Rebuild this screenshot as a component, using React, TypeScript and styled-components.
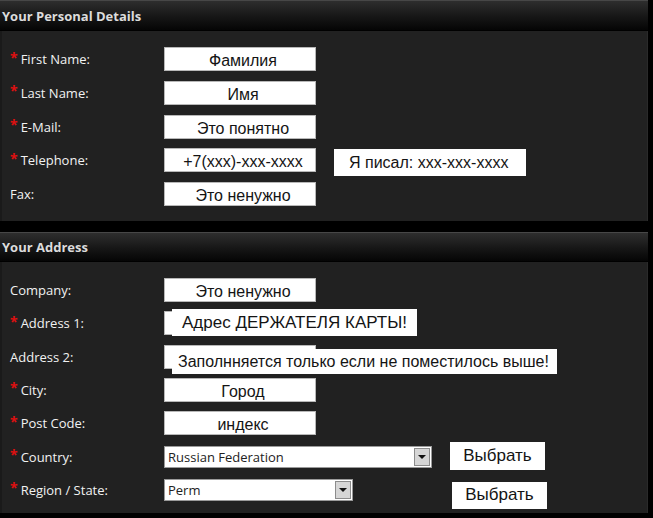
import React from 'react';
import styled, { createGlobalStyle } from 'styled-components';

const GlobalStyle = createGlobalStyle`
  html, body {
    margin: 0;
    padding: 0;
    background: #000;
  }
`;

const Page = styled.div`
  width: 653px;
  height: 518px;
  background: #000;
  overflow: hidden;
  font-family: "Open Sans", "Liberation Sans", sans-serif;
`;

const Section = styled.div<{ $gapTop?: number }>`
  width: 648px;
  margin-top: ${(p) => p.$gapTop || 0}px;
`;

const Header = styled.div<{ $h: number }>`
  height: ${(p) => p.$h}px;
  box-sizing: border-box;
  border-top: 1px solid #474747;
  background: linear-gradient(#2e2e2e, #161616 55%, #050505);
  display: flex;
  align-items: center;
  padding-left: 2px;
  font-weight: 700;
  font-size: 13px;
  color: #dcdcdc;
`;

const Body = styled.div<{ $gap: number; $pt: number; $pb: number }>`
  margin-top: 1px;
  background: #212121;
  border-left: 2px solid #1a1a1a;
  border-right: 1px solid #2a2a2a;
  display: flex;
  flex-direction: column;
  gap: ${(p) => p.$gap}px;
  padding: ${(p) => p.$pt}px 0 ${(p) => p.$pb}px 0;
`;

const Row = styled.div`
  height: 24px;
  display: flex;
  align-items: center;
  padding-left: 8px;
`;

const Label = styled.div`
  width: 154px;
  flex: none;
  font-size: 13px;
  color: #f2f2f2;
  display: flex;
  align-items: center;
`;

const Star = styled.span`
  color: #e01010;
  font-weight: 700;
  font-size: 14px;
  margin-right: 3px;
  position: relative;
  top: -2px;
`;

const Field = styled.div`
  position: relative;
  width: 152px;
  height: 24px;
  flex: none;
  box-sizing: border-box;
  background: #fff;
  border: 1px solid #b8b8b8;
  font-family: "Liberation Sans", Arial, sans-serif;
  font-size: 16px;
  color: #141414;
  text-align: center;
  line-height: 22px;
  padding: 2px 0 0 6px;
`;

const Note = styled.div<{ $w: number; $top: number; $left: number; $h: number; $size: number; $center?: boolean }>`
  position: absolute;
  top: ${(p) => p.$top}px;
  left: ${(p) => p.$left}px;
  width: ${(p) => p.$w}px;
  height: ${(p) => p.$h}px;
  box-sizing: border-box;
  background: #fff;
  font-family: "Liberation Sans", Arial, sans-serif;
  font-size: ${(p) => p.$size}px;
  color: #141414;
  line-height: ${(p) => p.$h}px;
  text-align: ${(p) => (p.$center ? 'center' : 'left')};
  padding-left: ${(p) => (p.$center ? 0 : 6)}px;
  white-space: nowrap;
`;

const SideNote = styled.div`
  margin-left: 18px;
  margin-top: 5px;
  width: 192px;
  height: 27px;
  box-sizing: border-box;
  background: #fff;
  font-family: "Liberation Sans", Arial, sans-serif;
  font-size: 16px;
  color: #141414;
  line-height: 27px;
  padding-left: 15px;
  white-space: nowrap;
`;

const Select = styled.div<{ $w: number }>`
  width: ${(p) => p.$w}px;
  height: 22px;
  flex: none;
  box-sizing: border-box;
  background: #fff;
  border: 1px solid #9a9a9a;
  display: flex;
  align-items: center;
  justify-content: space-between;
  font-size: 13px;
  color: #222;
  padding-left: 3px;
`;

const Arrow = styled.div`
  width: 16px;
  height: 18px;
  margin-right: 1px;
  box-sizing: border-box;
  background: #d6d6d6;
  border: 1px solid #8c8c8c;
  display: flex;
  align-items: center;
  justify-content: center;
  &::after {
    content: '';
    border-left: 4px solid transparent;
    border-right: 4px solid transparent;
    border-top: 4px solid #111;
  }
`;

const PickButton = styled.div<{ $ml: number; $h: number; $mt: number }>`
  margin-left: ${(p) => p.$ml}px;
  margin-top: ${(p) => p.$mt}px;
  width: 95px;
  height: ${(p) => p.$h}px;
  background: #fff;
  font-family: "Liberation Sans", Arial, sans-serif;
  font-size: 17px;
  color: #141414;
  display: flex;
  align-items: center;
  justify-content: center;
`;

type LineProps = { label: string; required?: boolean; children?: React.ReactNode };

const Line = ({ label, required, children }: LineProps) => (
  <Row>
    <Label>
      {required && <Star>*</Star>}
      {label}
    </Label>
    {children}
  </Row>
);

export default function App() {
  return (
    <Page>
      <GlobalStyle />
      <Section>
        <Header $h={30}>Your Personal Details</Header>
        <Body $gap={9.75} $pt={16} $pb={15}>
          <Line label="First Name:" required>
            <Field>Фамилия</Field>
          </Line>
          <Line label="Last Name:" required>
            <Field>Имя</Field>
          </Line>
          <Line label="E-Mail:" required>
            <Field>Это понятно</Field>
          </Line>
          <Line label="Telephone:" required>
            <Field>+7(xxx)-xxx-xxxx</Field>
            <SideNote>Я писал: xxx-xxx-xxxx</SideNote>
          </Line>
          <Line label="Fax:">
            <Field>Это ненужно</Field>
          </Line>
        </Body>
      </Section>
      <Section $gapTop={11}>
        <Header $h={29}>Your Address</Header>
        <Body $gap={9.33} $pt={16} $pb={11}>
          <Line label="Company:">
            <Field>Это ненужно</Field>
          </Line>
          <Line label="Address 1:" required>
            <Field>
              <Note $w={245} $h={27} $top={-3} $left={7} $size={17} $center>
                Адрес ДЕРЖАТЕЛЯ КАРТЫ!
              </Note>
            </Field>
          </Line>
          <Line label="Address 2:">
            <Field>
              <Note $w={385} $h={25} $top={3} $left={7} $size={16}>
                Заполнняется только если не поместилось выше!
              </Note>
            </Field>
          </Line>
          <Line label="City:" required>
            <Field>Город</Field>
          </Line>
          <Line label="Post Code:" required>
            <Field>индекс</Field>
          </Line>
          <Line label="Country:" required>
            <Select $w={268}>
              Russian Federation
              <Arrow />
            </Select>
            <PickButton $ml={18} $h={28} $mt={-1}>Выбрать</PickButton>
          </Line>
          <Line label="Region / State:" required>
            <Select $w={189}>
              Perm
              <Arrow />
            </Select>
            <PickButton $ml={99} $h={27} $mt={11}>Выбрать</PickButton>
          </Line>
        </Body>
      </Section>
    </Page>
  );
}
